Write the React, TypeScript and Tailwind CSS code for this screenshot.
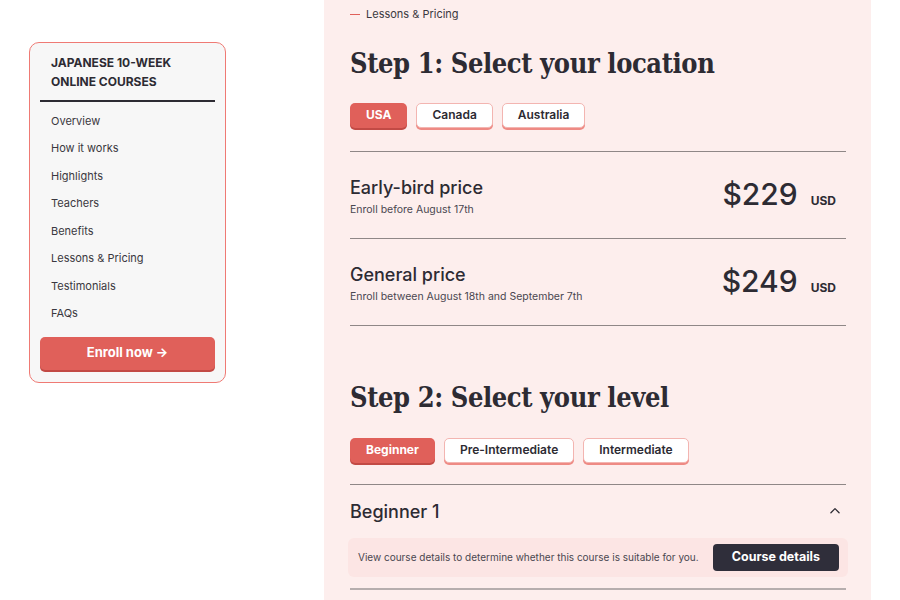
import React from 'react';

const NAV = ['Overview', 'How it works', 'Highlights', 'Teachers', 'Benefits', 'Lessons & Pricing', 'Testimonials', 'FAQs'];

const PRICES = [
  { title: 'Early-bird price', note: 'Enroll before August 17th', amount: '$229' },
  { title: 'General price', note: 'Enroll between August 18th and September 7th', amount: '$249' },
];

const Pill: React.FC<{ label: string; active?: boolean }> = ({ label, active }) =>
  active ? (
    <button className="h-[25px] px-[16px] rounded-[5px] bg-[#e0605a] text-white text-[12px] font-bold shadow-[0_2px_0_#c24a45]">
      {label}
    </button>
  ) : (
    <button className="h-[25px] px-[15px] rounded-[5px] bg-white text-[#2d2b33] text-[12px] font-semibold border border-[#f3b5b1] shadow-[0_2px_0_#ee8a84]">
      {label}
    </button>
  );

const Heading: React.FC<{ children: React.ReactNode }> = ({ children }) => (
  <h2 className="text-[27px] leading-[36px] font-bold tracking-[-0.4px] [font-stretch:condensed] text-[#2d2b33] font-['DejaVu_Serif_Condensed','DejaVu_Serif',serif]">
    {children}
  </h2>
);

const Sidebar: React.FC = () => (
  <aside className="w-[197px] mt-[42px] ml-[29px] rounded-[10px] border-[1.5px] border-[#ef7a74] bg-[#f7f7f7] px-[10px] pt-[10px] pb-[12px]">
    <div className="px-[11px] text-[12px] leading-[19px] font-bold text-[#2d2b33] uppercase">
      Japanese 10-week<br />online courses
    </div>
    <div className="mt-[9px] h-[1.5px] bg-[#2d2b33]" />
    <ul className="mt-[6px] px-[11px] text-[11px] text-[#3a3840]">
      {NAV.map((n) => (
        <li key={n} className="h-[27.5px] leading-[27.5px]">{n}</li>
      ))}
    </ul>
    <button className="mt-[9px] w-full h-[33px] rounded-[5px] bg-[#e0605a] text-white text-[13px] font-bold shadow-[0_2px_0_#c24a45]">
      Enroll now →
    </button>
  </aside>
);

const App: React.FC = () => {
  return (
    <div className="w-[900px] h-[600px] overflow-hidden bg-white flex font-['Inter',sans-serif]">
      <div className="w-[324px] shrink-0">
        <Sidebar />
      </div>
      <main className="w-[547px] h-[600px] bg-[#fdeeed] pl-[26px] pr-[25px]">
        <div className="flex items-center gap-[6px] pt-[6px] text-[11px] text-[#3a3840]">
          <span className="w-[10px] h-[1.5px] bg-[#e0605a]" />
          Lessons &amp; Pricing
        </div>
        <div className="mt-[23px]">
          <Heading>Step 1: Select your location</Heading>
        </div>
        <div className="mt-[21px] flex gap-[9px]">
          <Pill label="USA" active />
          <Pill label="Canada" />
          <Pill label="Australia" />
        </div>
        <div className="mt-[23px] border-t border-[#8f8787]">
          {PRICES.map((p) => (
            <div key={p.title} className="h-[87px] border-b border-[#8f8787] flex items-center justify-between">
              <div className="mt-[5px]">
                <div className="text-[18px] leading-[22px] font-medium text-[#2d2b33]">{p.title}</div>
                <div className="mt-[3px] text-[10.5px] text-[#4a4750]">{p.note}</div>
              </div>
              <div className="flex items-baseline gap-[13px] pr-[10px]">
                <span className="text-[30px] font-medium text-[#2d2b33]">{p.amount}</span>
                <span className="text-[12px] font-bold text-[#2d2b33]">USD</span>
              </div>
            </div>
          ))}
        </div>
        <div className="mt-[54px]">
          <Heading>Step 2: Select your level</Heading>
        </div>
        <div className="mt-[22px] flex gap-[9px]">
          <Pill label="Beginner" active />
          <Pill label="Pre-Intermediate" />
          <Pill label="Intermediate" />
        </div>
        <div className="mt-[21px] border-t border-[#8f8787]">
          <div className="h-[53px] flex items-center justify-between pr-[4px]">
            <span className="text-[18px] font-medium text-[#2d2b33]">Beginner 1</span>
            <svg width="14" height="14" viewBox="0 0 24 24" fill="none" stroke="#2d2b33" strokeWidth="2.2" strokeLinecap="round" strokeLinejoin="round">
              <path d="M5 15l7-7 7 7" />
            </svg>
          </div>
          <div className="h-[39px] -mx-[2px] rounded-[6px] bg-[#fce5e4] flex items-center justify-between pl-[10px] pr-[9px]">
            <span className="text-[10px] text-[#4a4750]">View course details to determine whether this course is suitable for you.</span>
            <button className="h-[27px] px-[19px] rounded-[4px] bg-[#2f2e3a] text-white text-[12.5px] font-bold">
              Course details
            </button>
          </div>
          <div className="mt-[11px] border-t-2 border-[#b6aeae]" />
        </div>
      </main>
    </div>
  );
};

export default App;
